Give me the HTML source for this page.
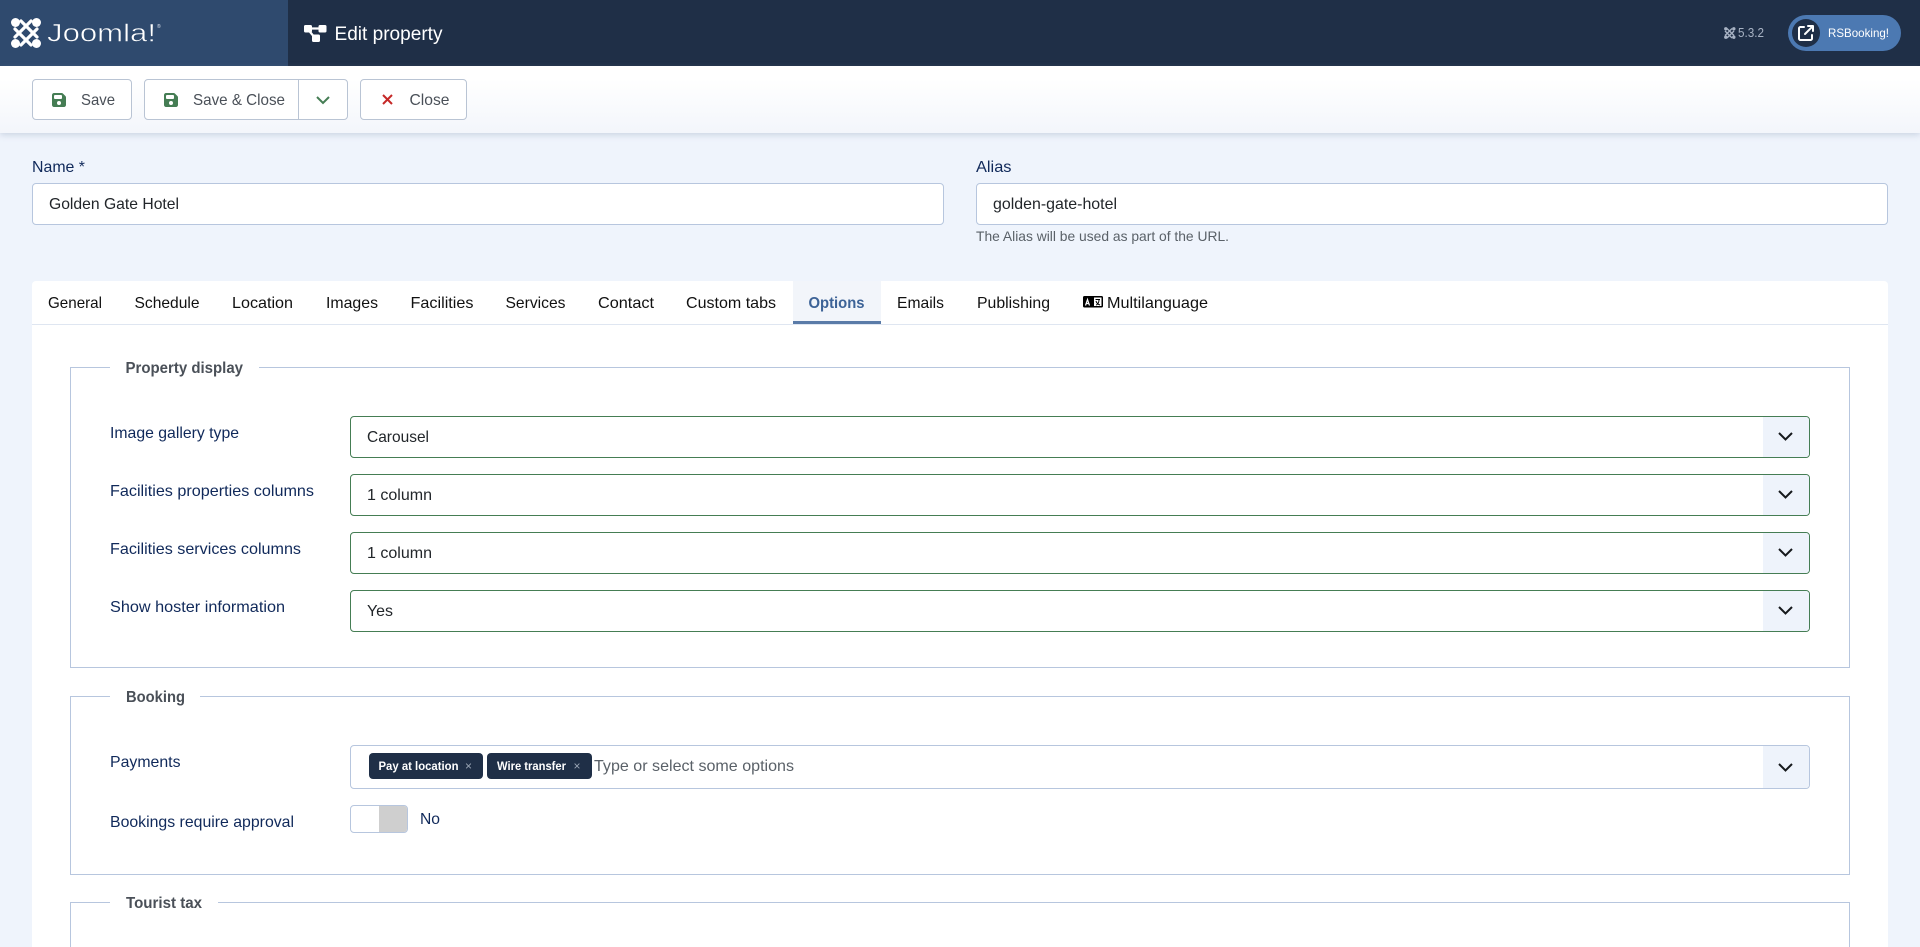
<!DOCTYPE html>
<html lang="en">
<head>
<meta charset="utf-8">
<title>Edit property</title>
<style>
html,body{margin:0;padding:0;width:1920px;height:947px;overflow:hidden;background:#eff4fc;font-family:"Liberation Sans",sans-serif}
#page{position:absolute;left:0;top:0;width:1920px;height:947px;overflow:hidden}
.a{position:absolute;box-sizing:border-box}
.btn{background:#fff;border:1px solid #b9c4d4;border-radius:4px}
.sel{left:350px;width:1460px;height:42px;background:#fff;border:1px solid #457d54;border-radius:4px;overflow:hidden}
.sel i{position:absolute;right:0;top:0;bottom:0;width:46px;background:#eef3fb}
.fs{left:70px;width:1780px;border:1px solid #b7c6de;background:#fff}
.lg{height:4px;background:#fff}
#t{position:absolute;left:0;top:0}
#t text{font-family:"Liberation Sans",sans-serif;font-size:16px}
.lb{fill:#10295a}
.tb{fill:#111}
.v{fill:#22262a}
.b{font-weight:bold;fill:#4a5058}
.tg{font-weight:bold;font-size:12px !important;fill:#fff}
</style>
</head>
<body>
<div id="page">
<div class="a" style="left:0;top:0;width:1920px;height:66px;background:#1f2f47"></div>
<div class="a" style="left:0;top:0;width:288px;height:66px;background:#2f4a6e"></div>
<div class="a" style="left:0;top:66px;width:1920px;height:67px;background:linear-gradient(#fff 20%,#f3f6fb);box-shadow:0 2px 6px rgba(120,140,170,.3)"></div>

<div class="a btn" style="left:32px;top:79px;width:100px;height:41px"></div>
<div class="a btn" style="left:144px;top:79px;width:204px;height:41px"></div>
<div class="a" style="left:298px;top:79px;width:1px;height:41px;background:#b9c4d4"></div>
<div class="a btn" style="left:360px;top:79px;width:107px;height:41px"></div>

<div class="a" style="left:32px;top:183px;width:912px;height:42px;background:#fff;border:1px solid #b7c6de;border-radius:4px"></div>
<div class="a" style="left:976px;top:183px;width:912px;height:42px;background:#fff;border:1px solid #b7c6de;border-radius:4px"></div>

<div class="a" style="left:32px;top:281px;width:1856px;height:666px;background:#fff;border-radius:4px 4px 0 0"></div>
<div class="a" style="left:32px;top:324px;width:1856px;height:1px;background:#dfe6f1"></div>
<div class="a" style="left:793px;top:281px;width:88px;height:43px;background:#f2f5fa;border-bottom:3px solid #5a7ba8"></div>

<div class="a fs" style="top:367px;height:301px"></div>
<div class="a lg" style="left:110px;top:365px;width:149px"></div>
<div class="a sel" style="top:416px"><i></i></div>
<div class="a sel" style="top:474px"><i></i></div>
<div class="a sel" style="top:532px"><i></i></div>
<div class="a sel" style="top:590px"><i></i></div>

<div class="a fs" style="top:696px;height:179px"></div>
<div class="a lg" style="left:110px;top:694px;width:90px"></div>
<div class="a sel" style="top:745px;height:44px;border-color:#b7c6de"><i></i></div>
<div class="a" style="left:369px;top:753px;width:114px;height:26px;background:#1f2f47;border-radius:4px"></div>
<div class="a" style="left:487px;top:753px;width:105px;height:26px;background:#1f2f47;border-radius:4px"></div>
<div class="a" style="left:350px;top:805px;width:58px;height:28px;background:#fff;border:1px solid #b7c6de;border-radius:4px;overflow:hidden"><div class="a" style="left:28px;top:0;width:30px;height:28px;background:#cfcfcf"></div></div>

<div class="a fs" style="top:902px;height:45px;border-bottom:0"></div>
<div class="a lg" style="left:110px;top:900px;width:108px"></div>

<div class="a" style="left:1788px;top:15px;width:113px;height:36px;background:#4c79b2;border-radius:18px"></div>
<div class="a" style="left:1792px;top:19px;width:28px;height:28px;background:#1f2f47;border-radius:50%"></div>

<svg id="t" width="1920" height="947" viewBox="0 0 1920 947" xmlns="http://www.w3.org/2000/svg">
<!-- Joomla mark -->
<g stroke="#fff" fill="none" stroke-width="3.200" stroke-linecap="round">
<path d="M21 21L37 37"/>
<path d="M15 29L31 45"/>
<path d="M15 37L31 21"/>
<path d="M21 45L37 29"/>
</g>
<g fill="#fff"><circle cx="15.500" cy="22.500" r="4.500"/><circle cx="36.500" cy="22.500" r="4.500"/><circle cx="15.500" cy="43.500" r="4.500"/><circle cx="36.500" cy="43.500" r="4.500"/></g>
<text x="47" y="41.500" textLength="109" lengthAdjust="spacingAndGlyphs" style="font-size:25px" fill="#fff" stroke="#2f4a6e" stroke-width=".55">Joomla!</text>
<text x="157" y="28" style="font-size:5px" fill="#dfe6f0">®</text>

<!-- Edit property icon -->
<g fill="#fff">
<rect x="304" y="25" width="8" height="7.500" rx="1.500"/>
<rect x="318.500" y="25" width="8" height="7.500" rx="1.500"/>
<rect x="312" y="34.500" width="8" height="7.500" rx="1.500"/>
</g>
<path d="M310 28.500H320M308.500 30L315 38" fill="none" stroke="#fff" stroke-width="2.200"/>
<text x="334.500" y="40" textLength="108" lengthAdjust="spacingAndGlyphs" style="font-size:19px" fill="#fff">Edit property</text>

<!-- small mark -->
<g fill="none" stroke="#a8b3c4" stroke-width="1.300">
<path d="M1727 28.500L1734 35.500M1725 31L1732 38M1725 35.500L1732 28.500M1727 38L1734 31"/>
</g>
<g fill="#a8b3c4"><circle cx="1725.800" cy="28.800" r="1.700"/><circle cx="1733.800" cy="28.800" r="1.700"/><circle cx="1725.800" cy="37.200" r="1.700"/><circle cx="1733.800" cy="37.200" r="1.700"/></g>
<text x="1738" y="37" textLength="26" lengthAdjust="spacingAndGlyphs" style="font-size:13px" fill="#a8b3c4">5.3.2</text>
<svg x="1798" y="25" width="16" height="16" viewBox="0 0 512 512"><path fill="#fff" d="M320 0c-17.700 0-32 14.300-32 32s14.300 32 32 32h82.700L201.400 265.400c-12.500 12.500-12.500 32.800 0 45.300s32.800 12.500 45.300 0L448 109.300V192c0 17.700 14.300 32 32 32s32-14.300 32-32V32c0-17.700-14.300-32-32-32H320zM80 32C35.800 32 0 67.800 0 112V432c0 44.200 35.800 80 80 80H400c44.200 0 80-35.800 80-80V320c0-17.700-14.300-32-32-32s-32 14.300-32 32V432c0 8.800-7.200 16-16 16H80c-8.800 0-16-7.200-16-16V112c0-8.800 7.200-16 16-16H192c17.700 0 32-14.300 32-32s-14.300-32-32-32H80z"/></svg>
<text x="1828" y="37" textLength="61" lengthAdjust="spacingAndGlyphs" style="font-size:12px" fill="#fff">RSBooking!</text>

<svg x="52" y="92" width="14" height="16" viewBox="0 0 448 512"><path fill="#457d54" d="M64 32C28.700 32 0 60.700 0 96V416c0 35.300 28.700 64 64 64H384c35.300 0 64-28.700 64-64V173.300c0-17-6.700-33.300-18.700-45.300L352 50.700C340 38.700 323.700 32 306.700 32H64zm0 96c0-17.700 14.300-32 32-32H288c17.700 0 32 14.300 32 32v64c0 17.700-14.300 32-32 32H96c-17.700 0-32-14.300-32-32V128zM224 288a64 64 0 1 1 0 128 64 64 0 1 1 0-128z"/></svg>
<svg x="164" y="92" width="14" height="16" viewBox="0 0 448 512"><path fill="#457d54" d="M64 32C28.700 32 0 60.700 0 96V416c0 35.300 28.700 64 64 64H384c35.300 0 64-28.700 64-64V173.300c0-17-6.700-33.300-18.700-45.300L352 50.700C340 38.700 323.700 32 306.700 32H64zm0 96c0-17.700 14.300-32 32-32H288c17.700 0 32 14.300 32 32v64c0 17.700-14.300 32-32 32H96c-17.700 0-32-14.300-32-32V128zM224 288a64 64 0 1 1 0 128 64 64 0 1 1 0-128z"/></svg>
<path d="M317 97l6 6 6-6" fill="none" stroke="#457d54" stroke-width="2"/>
<path d="M383 95l9 9M392 95l-9 9" fill="none" stroke="#c52827" stroke-width="2"/>
<text x="81" y="105" textLength="34" lengthAdjust="spacingAndGlyphs" fill="#4a5058">Save</text>
<text x="193" y="105" textLength="92" lengthAdjust="spacingAndGlyphs" fill="#4a5058">Save &amp; Close</text>
<text x="409.500" y="105" textLength="40" lengthAdjust="spacingAndGlyphs" fill="#4a5058">Close</text>

<text class="lb" x="32" y="172" textLength="53" lengthAdjust="spacingAndGlyphs">Name *</text>
<text class="lb" x="976" y="172" textLength="35.500" lengthAdjust="spacingAndGlyphs">Alias</text>
<text class="v" x="49" y="209" textLength="130" lengthAdjust="spacingAndGlyphs">Golden Gate Hotel</text>
<text class="v" x="993" y="209" textLength="124" lengthAdjust="spacingAndGlyphs">golden-gate-hotel</text>
<text x="976" y="241" textLength="253" lengthAdjust="spacingAndGlyphs" style="font-size:14px" fill="#5a6168">The Alias will be used as part of the URL.</text>

<text class="tb" x="48" y="308" textLength="54" lengthAdjust="spacingAndGlyphs">General</text>
<text class="tb" x="134.500" y="308" textLength="65" lengthAdjust="spacingAndGlyphs">Schedule</text>
<text class="tb" x="232" y="308" textLength="61" lengthAdjust="spacingAndGlyphs">Location</text>
<text class="tb" x="326" y="308" textLength="52" lengthAdjust="spacingAndGlyphs">Images</text>
<text class="tb" x="410.500" y="308" textLength="63" lengthAdjust="spacingAndGlyphs">Facilities</text>
<text class="tb" x="505.500" y="308" textLength="60" lengthAdjust="spacingAndGlyphs">Services</text>
<text class="tb" x="598" y="308" textLength="56" lengthAdjust="spacingAndGlyphs">Contact</text>
<text class="tb" x="686" y="308" textLength="90" lengthAdjust="spacingAndGlyphs">Custom tabs</text>
<text x="808.500" y="308" textLength="56" lengthAdjust="spacingAndGlyphs" font-weight="bold" fill="#3d6397">Options</text>
<text class="tb" x="897" y="308" textLength="47" lengthAdjust="spacingAndGlyphs">Emails</text>
<text class="tb" x="977" y="308" textLength="73" lengthAdjust="spacingAndGlyphs">Publishing</text>
<rect x="1083" y="296" width="20" height="11.500" rx="1.500" fill="#000"/>
<rect x="1094" y="297.500" width="7.500" height="8.500" fill="#fff"/>
<path d="M1085.500 305.500l2-6 2 6M1086.500 303.500h2" fill="none" stroke="#fff" stroke-width="1.200"/>
<path d="M1095.500 299.500h4.500M1099 300c0 3-2 5-3 5M1096 301c.5 2 2.500 3.500 4 4" fill="none" stroke="#000" stroke-width="1"/>
<text class="tb" x="1107" y="308" textLength="101" lengthAdjust="spacingAndGlyphs">Multilanguage</text>

<text class="b" x="125.500" y="373" textLength="117.500" lengthAdjust="spacingAndGlyphs">Property display</text>
<text class="b" x="126" y="702" textLength="59" lengthAdjust="spacingAndGlyphs">Booking</text>
<text class="b" x="126" y="908" textLength="76" lengthAdjust="spacingAndGlyphs">Tourist tax</text>

<text class="lb" x="110" y="438" textLength="129" lengthAdjust="spacingAndGlyphs">Image gallery type</text>
<text class="lb" x="110" y="496" textLength="204" lengthAdjust="spacingAndGlyphs">Facilities properties columns</text>
<text class="lb" x="110" y="554" textLength="191" lengthAdjust="spacingAndGlyphs">Facilities services columns</text>
<text class="lb" x="110" y="612" textLength="175" lengthAdjust="spacingAndGlyphs">Show hoster information</text>
<text class="lb" x="110" y="767" textLength="70.500" lengthAdjust="spacingAndGlyphs">Payments</text>
<text class="lb" x="110" y="827" textLength="184" lengthAdjust="spacingAndGlyphs">Bookings require approval</text>
<text class="lb" x="420" y="824" textLength="20" lengthAdjust="spacingAndGlyphs">No</text>

<text class="v" x="367" y="442" textLength="62" lengthAdjust="spacingAndGlyphs">Carousel</text>
<text class="v" x="367" y="500" textLength="65" lengthAdjust="spacingAndGlyphs">1 column</text>
<text class="v" x="367" y="558" textLength="65" lengthAdjust="spacingAndGlyphs">1 column</text>
<text class="v" x="367" y="616" textLength="26" lengthAdjust="spacingAndGlyphs">Yes</text>

<g fill="none" stroke="#16191c" stroke-width="2">
<path d="M1779 433l6.500 6.500 6.500-6.500"/>
<path d="M1779 491l6.500 6.500 6.500-6.500"/>
<path d="M1779 549l6.500 6.500 6.500-6.500"/>
<path d="M1779 607l6.500 6.500 6.500-6.500"/>
<path d="M1779 764l6.500 6.500 6.500-6.500"/>
</g>

<text class="tg" x="378.500" y="770" textLength="80" lengthAdjust="spacingAndGlyphs">Pay at location</text>
<text x="465" y="770" style="font-size:12px" fill="#9aa5b5">×</text>
<text class="tg" x="497" y="770" textLength="69" lengthAdjust="spacingAndGlyphs">Wire transfer</text>
<text x="573.500" y="770" style="font-size:12px" fill="#9aa5b5">×</text>
<text x="594" y="771" textLength="200" lengthAdjust="spacingAndGlyphs" fill="#5a6168">Type or select some options</text>
</svg>
</div>
</body>
</html>
